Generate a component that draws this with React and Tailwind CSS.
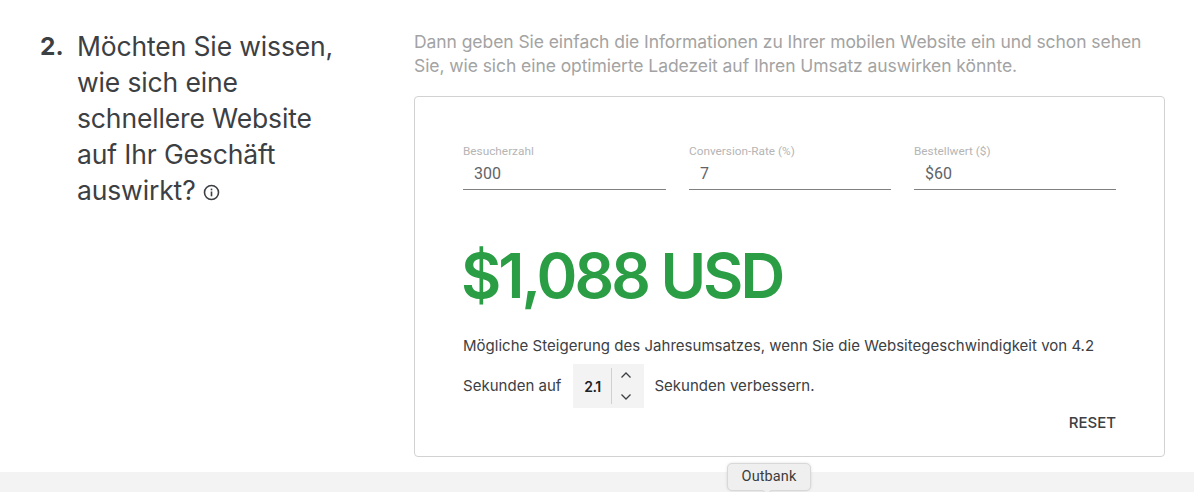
import React from "react";

const gs = "font-['Inter','Liberation_Sans',sans-serif]";
const rb = "font-['Roboto','Liberation_Sans',sans-serif]";

function Field({ label, value, width }) {
  return (
    <div className={width}>
      <div className={`${rb} text-[11.8px] leading-[14px] text-[#b5b5b5]`}>{label}</div>
      <div className={`${rb} h-[32px] border-b border-[#808080] pl-[11px] pt-[5px] text-[16px] leading-[22px] text-[#5f6368]`}>{value}</div>
    </div>
  );
}

export default function App() {
  return (
    <div className={`relative flex h-[492px] w-[1194px] flex-col overflow-hidden bg-white ${gs}`}>
      <div className="flex h-[472px] shrink-0 pl-[40px] pt-[28px]">
        <div className="flex w-[374px] shrink-0 items-start text-[#3c4043]">
          <div className="w-[37px] shrink-0 text-[24.5px] font-bold leading-[36px]">2.</div>
          <h2 className="w-[270px] text-[26.5px] font-normal leading-[36px] tracking-[-0.14px]">
            Möchten Sie wissen, wie sich eine schnellere Website auf Ihr Geschäft auswirkt?
            <svg className="ml-[7px] inline-block align-[-1px]" width="17" height="17" viewBox="0 0 17 17" fill="none">
              <circle cx="8.5" cy="8.5" r="7" stroke="#3c4043" strokeWidth="1.6" />
              <rect x="7.7" y="7.5" width="1.6" height="4.8" fill="#3c4043" />
              <rect x="7.7" y="4.6" width="1.6" height="1.7" fill="#3c4043" />
            </svg>
          </h2>
        </div>
        <div className="w-[751px] shrink-0">
          <p className="mt-[2px] text-[17.5px] leading-[24px] tracking-[-0.07px] text-[#a3a3a3]">
            Dann geben Sie einfach die Informationen zu Ihrer mobilen Website ein und schon sehen Sie, wie sich eine optimierte Ladezeit auf Ihren Umsatz auswirken könnte.
          </p>
          <div className="mt-[18px] h-[361px] rounded-[4px] border border-[#d2d2d2] pl-[48px] pr-[48px] pt-[47px]">
            <div className="flex gap-[23px]">
              <Field label="Besucherzahl" value="300" width="w-[203px]" />
              <Field label="Conversion-Rate (%)" value="7" width="w-[202px]" />
              <Field label="Bestellwert ($)" value="$60" width="w-[202px]" />
            </div>
            <div className="-ml-[2px] mt-[43px] text-[62px] font-semibold leading-[86px] tracking-[-3px] text-[#2a9d45]">$1,088 USD</div>
            <p className="mt-[15px] text-[15px] leading-[24px] tracking-[0.02px] text-[#3c4043]">
              Mögliche Steigerung des Jahresumsatzes, wenn Sie die Websitegeschwindigkeit von 4.2
            </p>
            <div className="mt-[6px] flex h-[44px] items-center text-[15px] tracking-[0.02px] text-[#3c4043]">
              <span>Sekunden auf</span>
              <div className="ml-[12px] flex h-[44px] w-[71px] items-center bg-[#f3f3f3]">
                <span className="w-[38px] shrink-0 text-center text-[14px] font-semibold tracking-[-0.5px] text-[#202124]">2.1</span>
                <div className="flex h-[36px] flex-1 flex-col items-center justify-between border-l border-[#d0d0d0] py-[3px] pr-[5px]">
                  <svg width="12" height="8" viewBox="0 0 12 8" fill="none"><path d="M1.5 6.5 6 2l4.500 4.500" stroke="#3c4043" strokeWidth="1.3" /></svg>
                  <svg width="12" height="8" viewBox="0 0 12 8" fill="none"><path d="M1.500 1.500 6 6l4.500-4.500" stroke="#3c4043" strokeWidth="1.3" /></svg>
                </div>
              </div>
              <span className="ml-[10px]">Sekunden verbessern.</span>
            </div>
            <div className="mt-[4px] text-right text-[15px] font-medium leading-[22px] text-[#3c4043]">RESET</div>
          </div>
        </div>
      </div>
      <div className="flex-1 bg-[#f3f3f3]" />
      <div className={`absolute left-[727px] top-[463px] flex h-[28px] w-[84px] items-center justify-center rounded-[5px] border border-[#d8d8d8] bg-[#efefef] text-[14.5px] tracking-[0.1px] text-[#3c3c3c] shadow-[0_0_3px_rgba(0,0,0,0.12)] ${rb}`}>
        Outbank
        <span className="absolute -bottom-[4px] left-[36px] h-[6px] w-[6px] rotate-45 border-b border-r border-[#d8d8d8] bg-[#efefef]" />
      </div>
    </div>
  );
}
